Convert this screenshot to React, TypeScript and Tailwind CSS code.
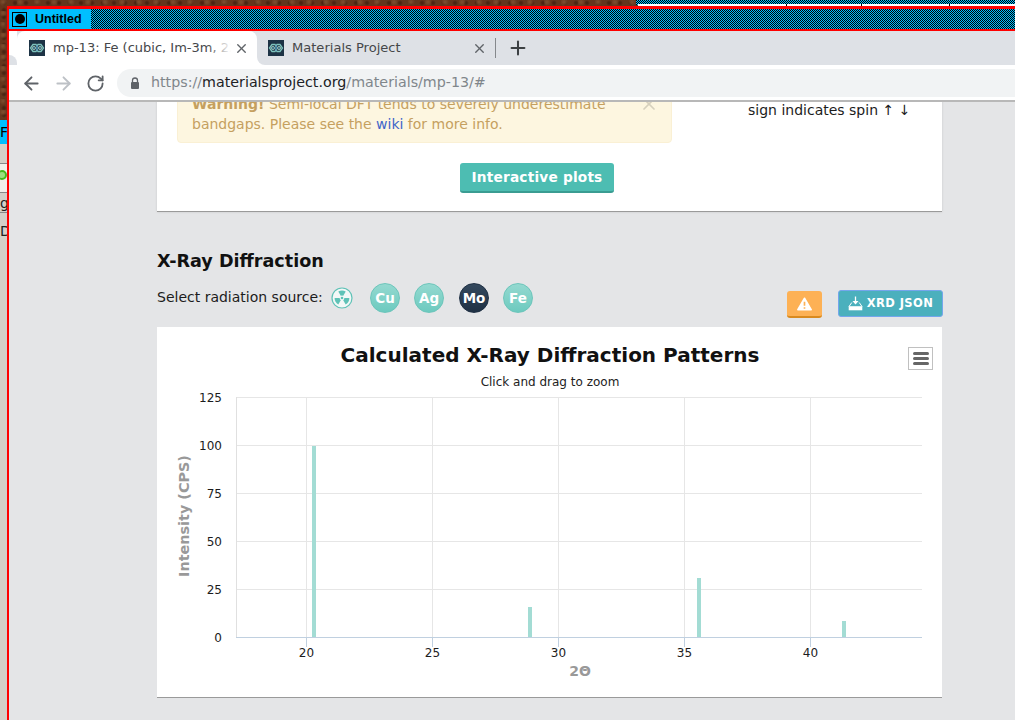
import { ArrowLeft, ArrowRight, RotateCw, X, Plus } from 'lucide-react';

const font = "font-['DejaVu_Sans',sans-serif]";

function Favicon() {
    return (
        <svg width="16" height="16" viewBox="0 0 16 16" className="shrink-0">
            <rect width="16" height="16" fill="#1d3345" />
            <path d="M1.5 8 4 4.5h3L8 6l1-1.500h3L14.500 8 12 11.500H9L8 10l-1 1.500H4z" fill="none" stroke="#7fc4bd" strokeWidth="1.300" />
            <path d="M4 8h2M10 8h2M8 5v6" stroke="#5aa6c8" strokeWidth="1.200" />
            <circle cx="5" cy="8" r="1.600" fill="none" stroke="#a8d8c8" strokeWidth="0.800" />
            <circle cx="11" cy="8" r="1.600" fill="none" stroke="#a8d8c8" strokeWidth="0.800" />
        </svg>
    );
}

// checkered title bar texture
function Dither({ id }: { id: string }) {
    return (
        <svg width="100%" height="100%" shapeRendering="crispEdges" className="block">
            <defs>
                <pattern id={id} width="2" height="2" patternUnits="userSpaceOnUse">
                    <rect width="2" height="2" fill="#00bfff" />
                    <rect width="1" height="1" fill="#000" />
                    <rect x="1" y="1" width="1" height="1" fill="#000" />
                </pattern>
            </defs>
            <rect width="100%" height="100%" fill={`url(#${id})`} />
        </svg>
    );
}

function TitleBar() {
    return (
        <div className="flex h-[20px] shrink-0 bg-[#00bfff]">
            <div className="flex w-[82px] shrink-0 items-center pl-[3px]">
                <div className="flex h-[15px] w-[15px] items-center justify-center border border-black">
                    <div className="h-[10px] w-[10px] rounded-full bg-black" />
                </div>
                <span className="ml-[8px] font-['Liberation_Sans',sans-serif] text-[12.5px] font-bold text-black">Untitled</span>
            </div>
            <div className="flex-1">
                <Dither id="dither-title" />
            </div>
        </div>
    );
}

function TabStrip() {
    return (
        <div className={`flex h-[34px] shrink-0 bg-[#dee1e6] ${font}`}>
            <div className="flex w-[8px] shrink-0 flex-col bg-white">
                <div className="flex-1" />
                <div className="h-[10px] rounded-tr-lg bg-[#dee1e6]" />
            </div>
            <div className="relative flex w-[240px] shrink-0 items-center rounded-t-lg bg-white pl-[12px]">
                <Favicon />
                <span className="ml-[8px] w-[178px] overflow-hidden whitespace-nowrap text-[13px] text-[#45474a]">mp-13: Fe (cubic, Im-3m, 229)</span>
                <div className="absolute left-[190px] top-0 h-full w-[24px] bg-gradient-to-r from-transparent to-white" />
                <X size={15} strokeWidth={2.2} className="absolute left-[216.5px] text-[#5f6368]" />
                <div className="absolute bottom-0 left-full h-[8px] w-[8px] bg-white">
                    <div className="h-full w-full rounded-bl-lg bg-[#dee1e6]" />
                </div>
            </div>
            <div className="flex w-[239px] shrink-0 items-center pl-[11px]">
                <Favicon />
                <span className="ml-[8px] text-[13.05px] text-[#45474a]">Materials Project</span>
                <div className="flex-1" />
                <X size={15} strokeWidth={2.2} className="mr-[8.5px] text-[#5f6368]" />
                <div className="h-[20px] w-px bg-[#85888c]" />
            </div>
            <div className="flex items-center pl-[11px]">
                <Plus size={22} strokeWidth={2.2} className="text-[#3c4043]" />
            </div>
        </div>
    );
}

function Toolbar() {
    return (
        <div className={`flex h-[37px] shrink-0 items-center border-b-2 border-[#b8b8b8] bg-white pt-[1px] ${font}`}>
            <ArrowLeft size={21} strokeWidth={2.2} className="ml-[11.5px] text-[#5f6368]" />
            <ArrowRight size={21} strokeWidth={2.2} className="ml-[11px] text-[#bdc1c6]" />
            <RotateCw size={19} strokeWidth={2.3} className="ml-[12.5px] text-[#5f6368]" />
            <div className="ml-[12px] flex h-[28px] flex-1 items-center rounded-l-full bg-[#f1f3f4] pl-[13px]">
                <svg width="10" height="13" viewBox="0 0 10 13">
                    <path d="M2.500 5V3.500a2.500 2.500 0 0 1 5 0V5" fill="none" stroke="#5f6368" strokeWidth="1.300" />
                    <rect x="1" y="5" width="8" height="7" rx="1" fill="#5f6368" />
                </svg>
                <span className="ml-[11px] whitespace-nowrap text-[14.25px] text-[#80868b]">
                    https://<span className="text-[#202124]">materialsproject.org</span>/materials/mp-13/#
                </span>
            </div>
        </div>
    );
}

function TopCard() {
    return (
        <div className={`-mt-[30px] ml-[148px] h-[140px] w-[785px] border-b border-[#9a9a9a] bg-white pt-[12px] shadow-[0_0_2px_#c8c8c8] ${font}`}>
            <div className="flex">
                <div className="relative ml-[20px] h-[59px] w-[495px] rounded border border-[#faf0d4] bg-[#fdf6e0] px-[14px] pt-[9px] text-[14px] leading-[20px] text-[#c5a05f]">
                    <b>Warning!</b> Semi-local DFT tends to severely underestimate
                    <br />
                    bandgaps. Please see the <span className="text-[#3f66c9]">wiki</span> for more info.
                    <X size={20} strokeWidth={2} className="absolute right-[12px] top-[9px] text-[#d6d0bd]" />
                </div>
                <div className="ml-[76px] mt-[16px] whitespace-nowrap text-[14px] leading-[20px] text-[#1c1c1c]">sign indicates spin ↑ ↓</div>
            </div>
            <button className="ml-[303px] mt-[20px] h-[30px] w-[154px] rounded-[3px] border-b-2 border-[#3a9c92] bg-[#4dbdb2] text-[13.7px] font-bold tracking-[0.2px] text-white">Interactive plots</button>
        </div>
    );
}

function RadiationIcon() {
    const blade = 'M11 11 L7.300 4.600 A7.400 7.400 0 0 1 14.700 4.600 Z';
    return (
        <svg width="22" height="22" viewBox="0 0 22 22" className="ml-[8px] shrink-0">
            <circle cx="11" cy="11" r="10" fill="#f3f8f7" stroke="#5fc2b7" strokeWidth="1.200" />
            <path d={blade} fill="#5fc2b7" />
            <path d={blade} fill="#5fc2b7" transform="rotate(120 11 11)" />
            <path d={blade} fill="#5fc2b7" transform="rotate(240 11 11)" />
            <circle cx="11" cy="11" r="2.400" fill="#f3f8f7" />
            <circle cx="11" cy="11" r="1.300" fill="#5fc2b7" />
        </svg>
    );
}

function Source({ label, dark, className }: { label: string; dark?: boolean; className: string }) {
    return (
        <div
            className={`flex h-[30px] w-[30px] shrink-0 items-center justify-center rounded-full border text-[13.5px] font-bold text-white ${
                dark ? 'border-[#1f3044] bg-gradient-to-b from-[#34495e] to-[#1f3044]' : 'border-[#6cc5bb] bg-gradient-to-b from-[#94d9d0] to-[#6ccabf]'
            } ${className}`}
        >
            {label}
        </div>
    );
}

function XrdHeader() {
    return (
        <div className={`ml-[148px] w-[786px] ${font}`}>
            <h2 className="mt-[38px] h-[22px] text-[17.6px] font-bold leading-[22px] text-[#111]">X-Ray Diffraction</h2>
            <div className="mt-[11px] flex h-[44px] items-start">
                <span className="mt-[4px] w-[166px] shrink-0 whitespace-nowrap text-[14px] leading-[20px] text-[#1c1c1c]">Select radiation source:</span>
                <div className="mt-[4px]"><RadiationIcon /></div>
                <Source label="Cu" className="ml-[17px]" />
                <Source label="Ag" className="ml-[14px]" />
                <Source label="Mo" dark className="ml-[15px]" />
                <Source label="Fe" className="ml-[14px]" />
                <div className="ml-[254px] mt-[8px] flex h-[27px] w-[35px] shrink-0 items-center justify-center rounded-[3px] border-b-2 border-[#d98a1f] bg-[#fdb155]">
                    <svg width="15" height="14" viewBox="0 0 16 15">
                        <path d="M8 1.500 15 13.500H1z" fill="#fff" stroke="#fff" strokeWidth="2" strokeLinejoin="round" />
                        <path d="M8 5v4.500M8 11v1.500" stroke="#fdb155" strokeWidth="1.800" />
                    </svg>
                </div>
                <div className="ml-[16px] mt-[7px] flex h-[27px] w-[105px] shrink-0 items-center justify-center rounded-[3px] border border-[#74a6ec] bg-[#4bb0bd] text-[11.5px] font-bold tracking-[0.4px] text-white">
                    <svg width="15" height="15" viewBox="0 0 15 15" className="mr-[4px]">
                        <path d="M7.500 .5v6" stroke="#fff" strokeWidth="1.300" />
                        <path d="M4.500 5h6l-3 3.500z" fill="#fff" />
                        <path d="M3.800 6.500 1 10.500M11.200 6.500 14 10.500" stroke="#fff" strokeWidth="1" />
                        <path d="M.7 10.200h13.600V14.300H.7z" fill="#fff" />
                    </svg>
                    XRD JSON
                </div>
            </div>
        </div>
    );
}

const xTicks = [
    { x: 306.5, label: '20' },
    { x: 432.5, label: '25' },
    { x: 558.5, label: '30' },
    { x: 684.5, label: '35' },
    { x: 810.5, label: '40' },
];
const yTicks = [
    { y: 397.5, label: '125' },
    { y: 445.5, label: '100' },
    { y: 493.5, label: '75' },
    { y: 541.5, label: '50' },
    { y: 589.5, label: '25' },
    { y: 637.5, label: '0' },
];
const bars = [
    { x: 312, top: 446 },
    { x: 528, top: 607 },
    { x: 697, top: 578 },
    { x: 842, top: 621 },
];

function ChartCard() {
    return (
        <div className={`relative ml-[148px] h-[371px] w-[785px] border-b border-[#9a9a9a] bg-white ${font}`}>
            <svg width="785" height="370" viewBox="157 327 785 370" fontFamily="'DejaVu Sans', sans-serif">
                <text x="550" y="362" textAnchor="middle" fontSize="20" fontWeight="700" fill="#111">Calculated X-Ray Diffraction Patterns</text>
                <text x="550" y="386" textAnchor="middle" fontSize="12" fill="#222">Click and drag to zoom</text>
                {yTicks.map((t) => (
                    <g key={t.label}>
                        <line x1="236" x2="922" y1={t.y} y2={t.y} stroke={t.label === '0' ? '#c0d0e0' : '#e6e6e6'} />
                        <text x="222" y={t.y + 4.5} textAnchor="end" fontSize="12" fill="#1c1c1c">{t.label}</text>
                    </g>
                ))}
                <line x1="236.5" x2="236.5" y1="397" y2="637" stroke="#e0e0e0" />
                {xTicks.map((t) => (
                    <g key={t.label}>
                        <line x1={t.x} x2={t.x} y1="397" y2="637" stroke="#e6e6e6" />
                        <line x1={t.x} x2={t.x} y1="637" y2="647" stroke="#c0d0e0" />
                        <text x={t.x} y="657" textAnchor="middle" fontSize="12" fill="#1c1c1c">{t.label}</text>
                    </g>
                ))}
                {bars.map((b) => (
                    <rect key={b.x} x={b.x} y={b.top} width="4" height={637 - b.top} fill="#a3dcd4" />
                ))}
                <text transform="translate(188.5 516) rotate(-90)" textAnchor="middle" fontSize="14.4" fontWeight="700" fill="#999">Intensity (CPS)</text>
                <text x="580" y="676" textAnchor="middle" fontSize="14" fontWeight="700" fill="#999">2Θ</text>
            </svg>
            <div className="absolute left-[751px] top-[20px] flex h-[23px] w-[25px] flex-col items-center justify-center gap-[2px] border border-[#c0c0c0] bg-white">
                <div className="h-[3px] w-[16px] rounded-sm bg-[#666]" />
                <div className="h-[3px] w-[16px] rounded-sm bg-[#666]" />
                <div className="h-[3px] w-[16px] rounded-sm bg-[#666]" />
            </div>
        </div>
    );
}

function DesktopStrip() {
    // bits of other windows sticking out left of the browser
    return (
        <div className="absolute left-0 top-0 h-full w-[7px] overflow-hidden font-['DejaVu_Sans',sans-serif] text-[14px] leading-none text-[#222]">
            <div className="h-[120px]" />
            <div className="flex h-[24px] items-center bg-[#00bfff] text-black">F</div>
            <div className="h-[19px] bg-[#d4d0c8]" />
            <div className="h-[29px] border-t border-[#888] bg-[#f2f0ea] pt-[6px]">
                <div className="-ml-[3px] h-[10px] w-[10px] rounded-full border-2 border-[#46b81e] bg-[#9be07f]" />
            </div>
            <div className="flex h-[21px] items-center border-y border-[#888] bg-[#d4d0c8]">g</div>
            <div className="h-[507px] bg-[#d4d0c8] pt-[11px]">D</div>
        </div>
    );
}

export default function App() {
    return (
        <div className="relative h-[720px] w-[1015px] overflow-hidden bg-[#64351c] bg-[radial-gradient(circle_at_3px_2px,#7a4a2c_1px,transparent_4px),radial-gradient(circle_at_4px_3px,#4a2412_1px,transparent_3px)] bg-[length:17px_11px,11px_7px]">
            <DesktopStrip />
            <div className="absolute left-[636px] top-0 h-[5px] w-[379px]">
                <Dither id="dither-back" />
            </div>
            <div className="absolute left-[638px] top-[4px] flex h-[2px] w-[377px] bg-white">
                <div className="ml-[148px] h-full w-px bg-black" />
                <div className="ml-[74px] h-full w-px bg-black" />
                <div className="ml-[87px] h-full w-px bg-black" />
            </div>
            {/* browser window */}
            <div className="absolute left-[7px] top-[6px] flex h-[714px] w-[1008px] flex-col border-l-2 border-t-[3px] border-[#ff0000] bg-[#e4e5e7]">
                <TitleBar />
                <div className="h-[2px] shrink-0 bg-[#ff0000]" />
                <TabStrip />
                <Toolbar />
                <div className="flex-1 overflow-hidden">
                    <TopCard />
                    <XrdHeader />
                    <ChartCard />
                </div>
            </div>
        </div>
    );
}
